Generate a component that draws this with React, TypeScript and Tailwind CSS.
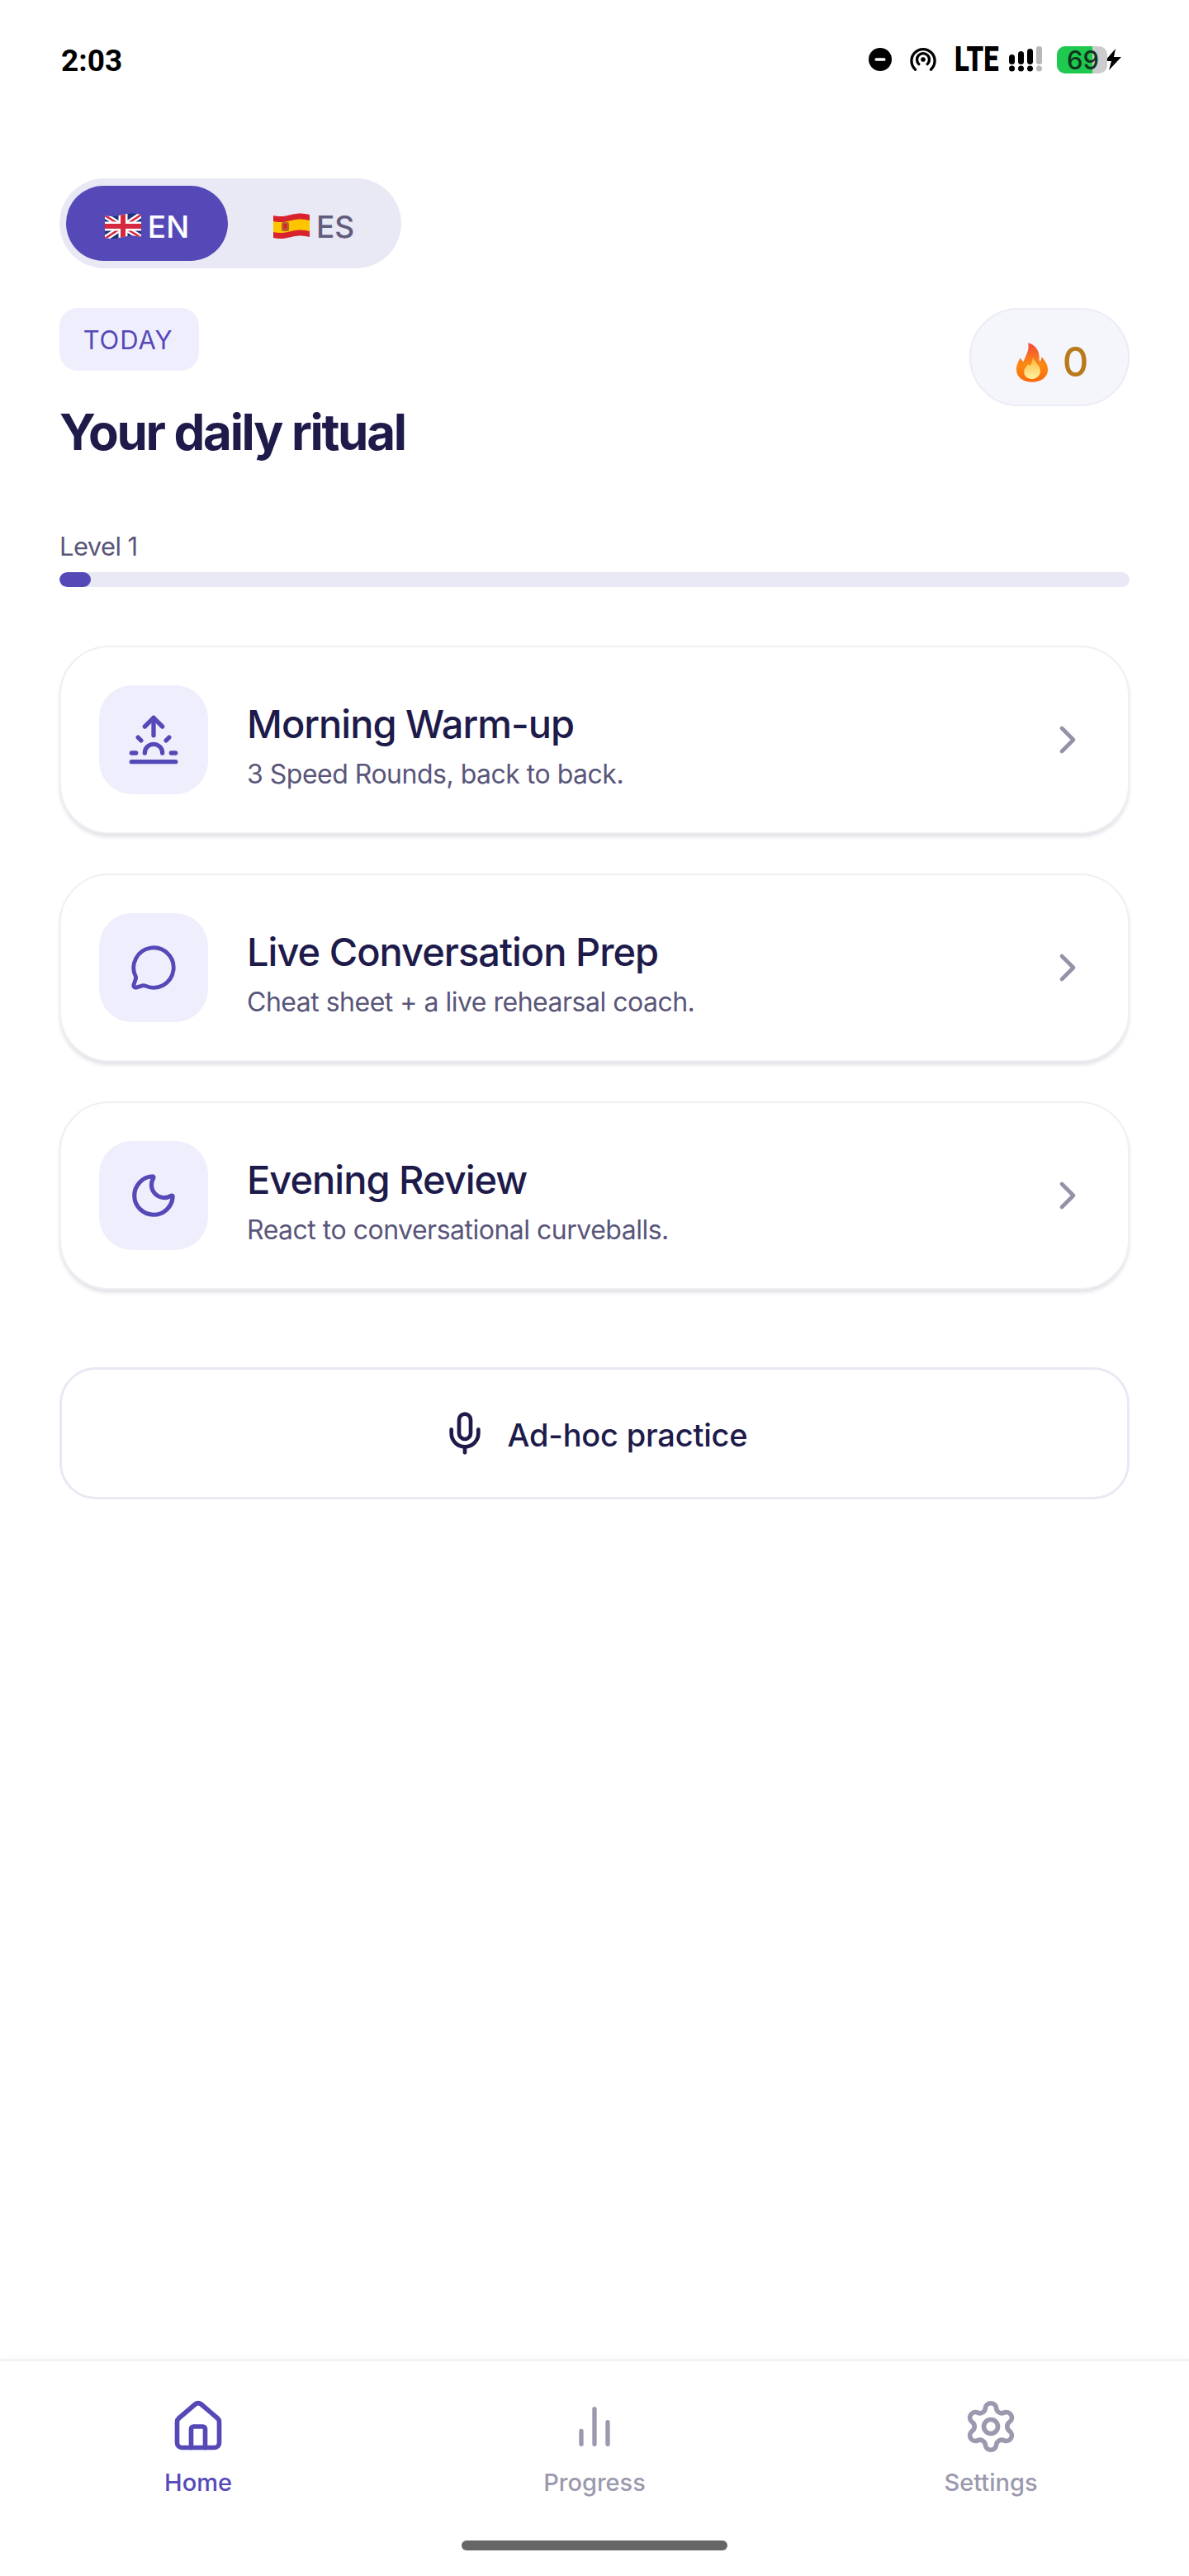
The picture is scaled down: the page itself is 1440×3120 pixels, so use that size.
import { ChevronRight, House, MessageCircle, Mic, Moon, Settings, Sunrise } from "lucide-react";
import type { ReactNode } from "react";

const rituals = [
  { title: "Morning Warm-up", subtitle: "3 Speed Rounds, back to back.", icon: <Sunrise size={64} strokeWidth={2} /> },
  { title: "Live Conversation Prep", subtitle: "Cheat sheet + a live rehearsal coach.", icon: <MessageCircle size={58} strokeWidth={2} /> },
  { title: "Evening Review", subtitle: "React to conversational curveballs.", icon: <Moon size={62} strokeWidth={2} /> },
];

const flagShape = "M0 3c8 2 14 1 22-1s15-2 22 0v27c-7-2-14-2-22 0s-14 3-22 1z";

function UkFlag() {
  return (
    <svg width="44" height="32" viewBox="0 0 44 32">
      <clipPath id="uk-clip">
        <path d={flagShape} />
      </clipPath>
      <g clipPath="url(#uk-clip)">
        <rect width="44" height="32" fill="#1c3578" />
        <path d="M0 3 44 30M44 2 0 31" stroke="#fff" strokeWidth="7" />
        <path d="M0 3 44 30M44 2 0 31" stroke="#d6283f" strokeWidth="2.6" />
        <path d="M22 0v32M0 16h44" stroke="#fff" strokeWidth="11" />
        <path d="M22 0v32M0 16h44" stroke="#d6283f" strokeWidth="6" />
      </g>
    </svg>
  );
}

function EsFlag() {
  return (
    <svg width="44" height="32" viewBox="0 0 44 32">
      <clipPath id="es-clip">
        <path d={flagShape} />
      </clipPath>
      <g clipPath="url(#es-clip)">
        <rect width="44" height="32" fill="#d8232f" />
        <path d="M0 10c8 2 14 1 22-1s15-2 22 0v13c-7-2-14-2-22 0s-14 3-22 1z" fill="#fdc500" />
        <rect x="10" y="11" width="9" height="11" rx="2" fill="#b5622a" />
        <rect x="12.5" y="13" width="4" height="6" fill="#d8232f" />
      </g>
    </svg>
  );
}

function Flame() {
  return (
    <svg width="40" height="50" viewBox="0 0 42 52">
      <defs>
        <linearGradient id="flame" x1="0" y1="0" x2="0" y2="1">
          <stop offset="0" stopColor="#f2483a" />
          <stop offset="0.55" stopColor="#fb8a12" />
          <stop offset="1" stopColor="#fb6a0c" />
        </linearGradient>
        <linearGradient id="inner" x1="0" y1="0" x2="0" y2="1">
          <stop offset="0" stopColor="#fdb43c" />
          <stop offset="1" stopColor="#fff4a0" />
        </linearGradient>
      </defs>
      <path d="M16 1c8 2 14 9 14 18 0 3 0 5 1 6 1-1 2-3 2-6 5 5 8 11 8 16 0 10-9 16-20 16S1 45 1 35c0-7 3-10 5-15 1 2 2 4 4 5 2-7 8-13 6-24z" fill="url(#flame)" />
      <path d="M22 19c1 5 7 9 9 15 2 8-4 13-10 13s-11-4-10-10c0-4 3-6 5-9 1 1 2 2 3 2 1-3 3-6 3-11z" fill="url(#inner)" />
    </svg>
  );
}

function StatusIcons() {
  return (
    <div className="flex items-center">
      <svg width="28" height="28" viewBox="0 0 30 30">
        <circle cx="15" cy="15" r="15" fill="#000" />
        <rect x="8" y="13" width="14" height="4" rx="2" fill="#fff" />
      </svg>
      <svg width="34" height="30" viewBox="0 0 36 32" className="ml-[21px]" fill="none" stroke="#000" strokeWidth="3.6" strokeLinecap="round">
        <path d="M8 29a15 15 0 1 1 20 0" />
        <path d="M12.5 22a8 8 0 1 1 11 0" />
        <circle cx="18" cy="16" r="3" fill="#000" stroke="none" />
      </svg>
      <div className="ml-[21px] h-[32px] w-[53px]">
        <span className="inline-block origin-left scale-x-[0.78] text-[42px] leading-[32px] font-black text-black font-['Roboto',sans-serif]">LTE</span>
      </div>
      <svg width="42" height="32" viewBox="0 0 42 32" className="ml-[12px]">
        <rect x="1" y="10" width="7" height="12" rx="3.5" fill="#000" />
        <circle cx="4.5" cy="27" r="3.5" fill="#000" />
        <rect x="12" y="6" width="7" height="16" rx="3.5" fill="#000" />
        <circle cx="15.5" cy="27" r="3.5" fill="#000" />
        <rect x="23" y="3" width="7" height="19" rx="3.5" fill="#000" />
        <circle cx="26.5" cy="27" r="3.5" fill="#000" />
        <rect x="34" y="0" width="7" height="22" rx="3" fill="#b9b9b9" />
        <circle cx="37.5" cy="27" r="3.5" fill="#b9b9b9" />
      </svg>
      <div className="relative ml-[17px] h-[33px] w-[61px]">
        <div className="flex h-full w-full overflow-hidden rounded-[10px] bg-[#cccccc]">
          <div className="h-full w-[43px] bg-[#1fc84f]" />
        </div>
        <span className="absolute top-0 left-[12px] text-[31px] leading-[33px] font-medium text-[#12331d] font-['Inter',sans-serif]">69</span>
      </div>
      <svg width="26" height="30" viewBox="0 0 26 30" className="-ml-[6px]">
        <path d="M16 2 3 17h8l-3 11L23 12h-9z" fill="#000" stroke="#fff" strokeWidth="2" paintOrder="stroke" />
      </svg>
    </div>
  );
}

function RitualCard({ title, subtitle, icon }: { title: string; subtitle: string; icon: ReactNode }) {
  return (
    <div className="flex h-[228px] items-center rounded-[60px] border-2 border-[#f0f0f3] bg-white pr-[45px] pl-[46px] shadow-[0_4px_4px_rgba(30,27,75,0.12)]">
      <div className="flex h-[132px] w-[132px] shrink-0 items-center justify-center rounded-[40px] bg-[#efeefc] text-[#5549b8]">
        {icon}
      </div>
      <div className="ml-[47px] min-w-0 flex-1 pt-[15px]">
        <div className="text-[47px] leading-[60px] font-medium tracking-[-1px] text-[#1e1b4b]">{title}</div>
        <div className="mt-[9px] text-[32px] leading-[44px] tracking-[-0.5px] text-[#59567a]">{subtitle}</div>
      </div>
      <ChevronRight size={56} strokeWidth={2} className="text-[#9492a8]" />
    </div>
  );
}

function NavItem({ label, active, children }: { label: string; active?: boolean; children: ReactNode }) {
  return (
    <div className={`flex flex-1 flex-col items-center ${active ? "text-[#5549b8]" : "text-[#9b99ae]"}`}>
      <div className="flex h-[72px] items-center justify-center">{children}</div>
      <div className="mt-[12px] text-[29px] leading-[40px] font-medium">{label}</div>
    </div>
  );
}

export default function App() {
  return (
    <div className="flex h-[3120px] w-[1440px] flex-col bg-white font-['Inter',sans-serif]">
      <div className="flex h-[144px] items-center justify-between pr-[79px] pl-[74px]">
        <span className="pt-[2px] text-[37px] leading-none font-bold text-black font-['Roboto',sans-serif]">2:03</span>
        <StatusIcons />
      </div>

      <main className="flex-1 px-[72px] pt-[72px]">
        <div className="flex h-[109px] w-[414px] items-center rounded-full bg-[#e9e8f5] pl-[8px]">
          <div className="flex h-[91px] w-[196px] items-center justify-center gap-[8px] rounded-full bg-[#5549b8] pt-[7px] text-[37px] leading-none font-medium text-white">
            <UkFlag />
            <span>EN</span>
          </div>
          <div className="flex h-[91px] flex-1 items-center justify-center gap-[8px] pt-[7px] pr-[2px] text-[37px] leading-none font-medium text-[#5f5c7c]">
            <EsFlag />
            <span>ES</span>
          </div>
        </div>

        <div className="mt-[48px] flex items-start justify-between">
          <div>
            <div className="flex h-[76px] w-[169px] items-center justify-center rounded-[22px] bg-[#efeefc] pt-[3px] pr-[3px] text-[31px] tracking-[0.9px] text-[#5549b8]">
              TODAY
            </div>
            <h1 className="mt-[32px] text-[60px] leading-[84px] font-bold tracking-[-2.3px] text-[#1e1b4b]">Your daily ritual</h1>
          </div>
          <div className="flex h-[119px] w-[194px] items-center justify-center gap-[17px] rounded-full border-2 border-[#ecebf6] bg-[#f5f5fc] pt-[12px] pl-[6px]">
            <Flame />
            <span className="text-[49px] leading-none font-medium text-[#b97a1c]">0</span>
          </div>
        </div>

        <div className="mt-[75px] text-[31px] leading-[44px] tracking-[-0.6px] text-[#59567a]">Level 1</div>
        <div className="mt-[9px] h-[18px] overflow-hidden rounded-full bg-[#e9e8f5]">
          <div className="h-full w-[38px] rounded-full bg-[#5549b8]" />
        </div>

        <div className="mt-[71px] flex flex-col gap-[48px]">
          {rituals.map((r) => (
            <RitualCard key={r.title} title={r.title} subtitle={r.subtitle} icon={r.icon} />
          ))}
        </div>

        <div className="mt-[94px] flex h-[160px] items-center justify-center gap-[24px] rounded-[44px] border-[3px] border-[#e9e8f5] bg-white text-[#1e1b4b]">
          <Mic size={56} strokeWidth={2} />
          <span className="pt-[4px] text-[38px] font-medium tracking-[-0.2px]">Ad-hoc practice</span>
        </div>
      </main>

      <nav className="flex h-[263px] flex-col border-t-[3px] border-[#f3f3f5] pt-[43px] shadow-[0_-3px_6px_rgba(30,27,75,0.02)]">
        <div className="flex">
          <NavItem label="Home" active>
            <House size={68} strokeWidth={2} />
          </NavItem>
          <NavItem label="Progress">
            <svg width="64" height="64" viewBox="0 0 24 24" fill="none" stroke="currentColor" strokeWidth="2" strokeLinecap="round">
              <path d="M18 20V10M12 20V4M6 20v-6" />
            </svg>
          </NavItem>
          <NavItem label="Settings">
            <Settings size={68} strokeWidth={2} />
          </NavItem>
        </div>
        <div className="mx-auto mt-[50px] h-[12px] w-[322px] rounded-full bg-[#666666]" />
      </nav>
    </div>
  );
}
